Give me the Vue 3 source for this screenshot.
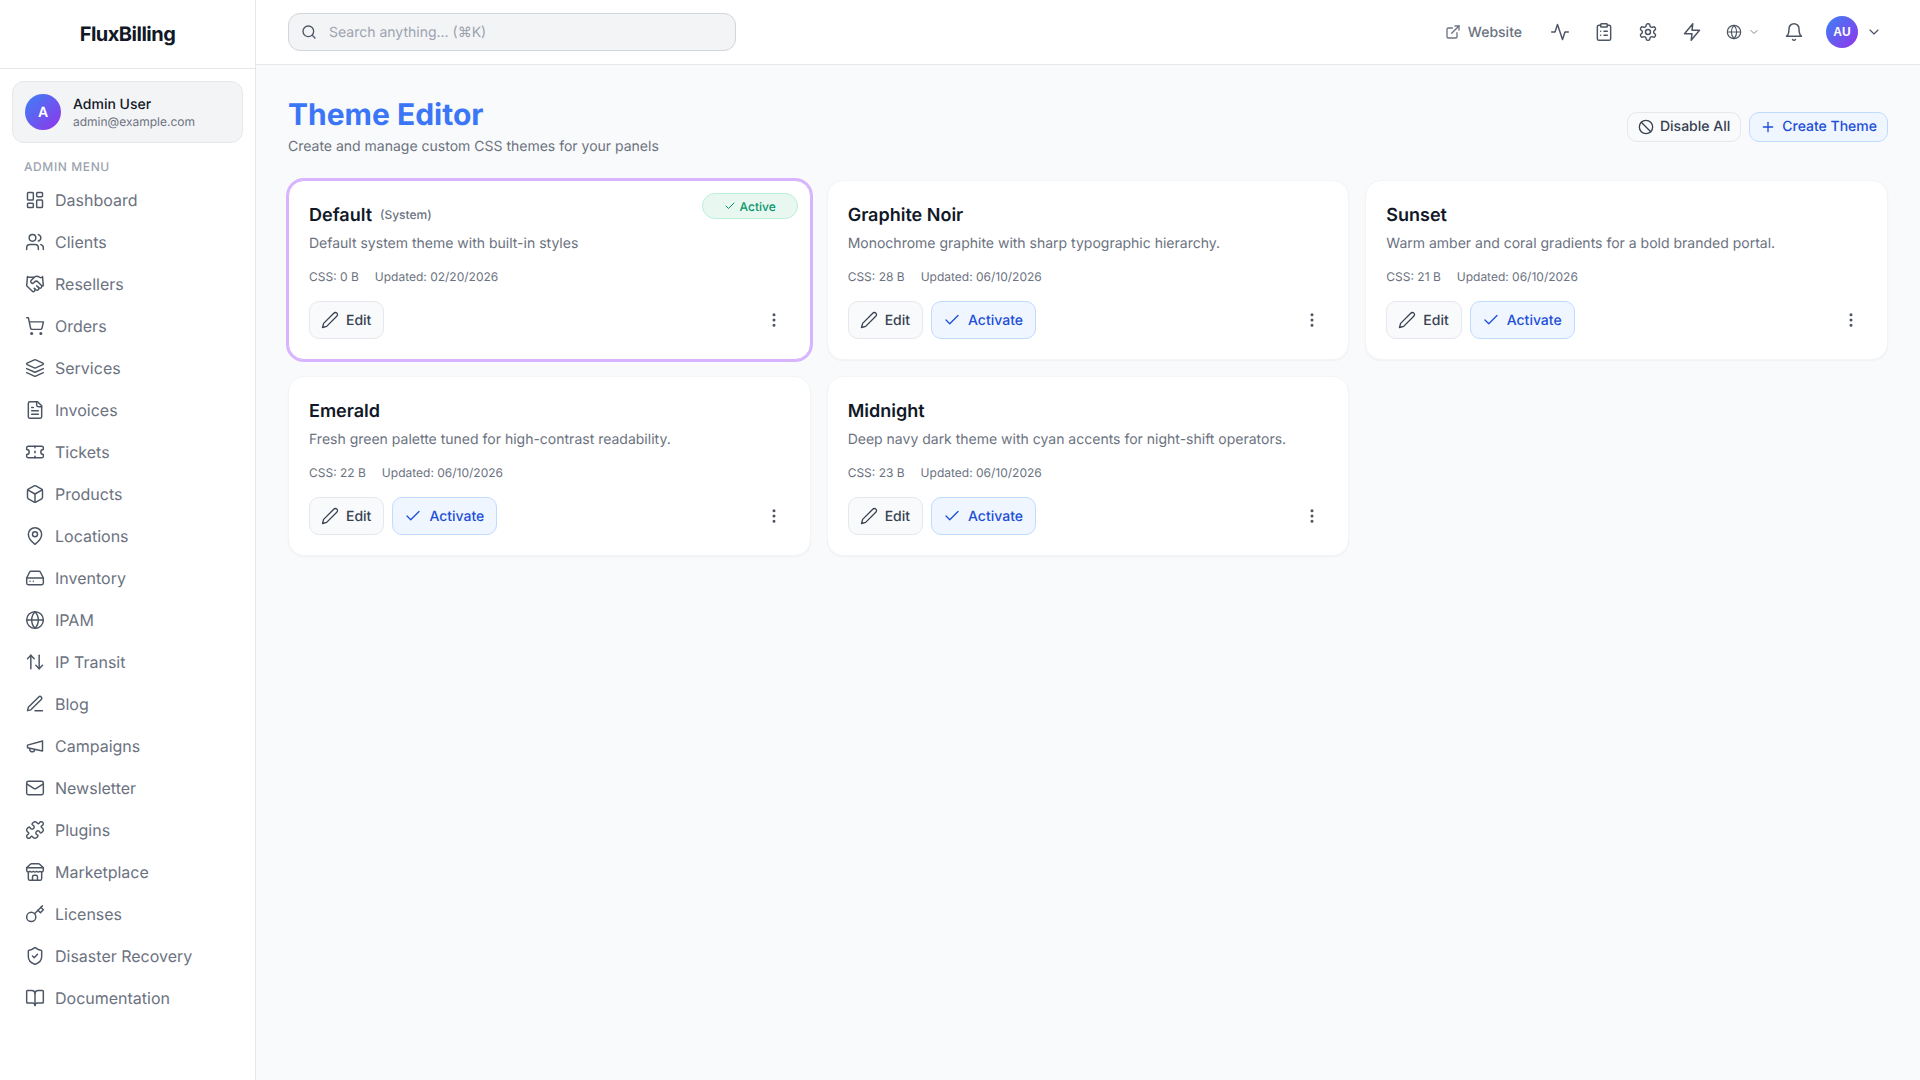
<script setup>
import { h } from 'vue';

const icons = {
    dashboard: '<rect x="3" y="3" width="7" height="9" rx="1"/><rect x="14" y="3" width="7" height="5" rx="1"/><rect x="14" y="12" width="7" height="9" rx="1"/><rect x="3" y="16" width="7" height="5" rx="1"/>',
    users: '<path d="M16 21v-2a4 4 0 0 0-4-4H6a4 4 0 0 0-4 4v2"/><circle cx="9" cy="7" r="4"/><path d="M22 21v-2a4 4 0 0 0-3-3.87"/><path d="M16 3.13a4 4 0 0 1 0 7.75"/>',
    handshake: '<path d="m11 17 2 2a1 1 0 1 0 3-3"/><path d="m14 14 2.5 2.5a1 1 0 1 0 3-3l-3.88-3.88a3 3 0 0 0-4.24 0l-.88.88a1 1 0 1 1-3-3l2.81-2.81a5.79 5.79 0 0 1 7.06-.87l.47.28a2 2 0 0 0 1.42.25L21 4"/><path d="m21 3 1 11h-2"/><path d="M3 3 2 14l6.5 6.5a1 1 0 1 0 3-3"/><path d="M3 4h8"/>',
    cart: '<circle cx="8" cy="21" r="1"/><circle cx="19" cy="21" r="1"/><path d="M2.05 2.05h2l2.66 12.42a2 2 0 0 0 2 1.58h9.78a2 2 0 0 0 1.95-1.57l1.65-7.43H5.12"/>',
    layers: '<path d="m12.83 2.18a2 2 0 0 0-1.66 0L2.6 6.08a1 1 0 0 0 0 1.83l8.58 3.91a2 2 0 0 0 1.66 0l8.58-3.9a1 1 0 0 0 0-1.83Z"/><path d="m22 17.65-9.17 4.16a2 2 0 0 1-1.66 0L2 17.65"/><path d="m22 12.65-9.17 4.16a2 2 0 0 1-1.66 0L2 12.65"/>',
    file: '<path d="M15 2H6a2 2 0 0 0-2 2v16a2 2 0 0 0 2 2h12a2 2 0 0 0 2-2V7Z"/><path d="M14 2v4a2 2 0 0 0 2 2h4"/><path d="M10 9H8"/><path d="M16 13H8"/><path d="M16 17H8"/>',
    ticket: '<path d="M2 9a3 3 0 0 1 0 6v2a2 2 0 0 0 2 2h16a2 2 0 0 0 2-2v-2a3 3 0 0 1 0-6V7a2 2 0 0 0-2-2H4a2 2 0 0 0-2 2Z"/><path d="M12 5v2"/><path d="M12 17v2"/><path d="M12 11v2"/>',
    box: '<path d="M21 8a2 2 0 0 0-1-1.73l-7-4a2 2 0 0 0-2 0l-7 4A2 2 0 0 0 3 8v8a2 2 0 0 0 1 1.73l7 4a2 2 0 0 0 2 0l7-4A2 2 0 0 0 21 16Z"/><path d="m3.3 7 8.7 5 8.7-5"/><path d="M12 22V12"/>',
    pin: '<path d="M20 10c0 6-8 12-8 12s-8-6-8-12a8 8 0 0 1 16 0Z"/><circle cx="12" cy="10" r="3"/>',
    drive: '<path d="M22 12H2"/><path d="M5.45 5.11 2 12v6a2 2 0 0 0 2 2h16a2 2 0 0 0 2-2v-6l-3.45-6.89A2 2 0 0 0 16.76 4H7.24a2 2 0 0 0-1.79 1.11z"/><path d="M6 16h.01"/><path d="M10 16h.01"/>',
    globe: '<circle cx="12" cy="12" r="10"/><path d="M12 2a14.5 14.5 0 0 0 0 20 14.5 14.5 0 0 0 0-20"/><path d="M2 12h20"/>',
    updown: '<path d="m21 16-4 4-4-4"/><path d="M17 20V4"/><path d="m3 8 4-4 4 4"/><path d="M7 4v16"/>',
    penline: '<path d="M12 20h9"/><path d="M16.5 3.5a2.12 2.12 0 0 1 3 3L7 19l-4 1 1-4Z"/>',
    megaphone: '<path d="m3 11 18-5v12L3 14v-3z"/><path d="M11.6 16.8a3 3 0 1 1-5.8-1.6"/>',
    mail: '<rect x="2" y="4" width="20" height="16" rx="2"/><path d="m22 7-8.97 5.7a1.94 1.94 0 0 1-2.06 0L2 7"/>',
    puzzle: '<path d="M19.439 7.85c-.049.322.059.648.289.878l1.568 1.568c.47.47.706 1.087.706 1.704s-.235 1.233-.706 1.704l-1.611 1.611a.98.98 0 0 1-.837.276c-.47-.07-.802-.48-.968-.925a2.501 2.501 0 1 0-3.214 3.214c.446.166.855.497.925.968a.979.979 0 0 1-.276.837l-1.61 1.61a2.404 2.404 0 0 1-1.705.707 2.402 2.402 0 0 1-1.704-.706l-1.568-1.568a1.026 1.026 0 0 0-.877-.29c-.493.074-.84.504-1.02.968a2.5 2.5 0 1 1-3.237-3.237c.464-.18.894-.527.967-1.02a1.026 1.026 0 0 0-.289-.877l-1.568-1.568A2.402 2.402 0 0 1 1.998 12c0-.617.236-1.234.706-1.704L4.23 8.77c.24-.24.581-.353.917-.303.515.077.877.528 1.073 1.01a2.5 2.5 0 1 0 3.259-3.259c-.482-.196-.933-.558-1.01-1.073-.05-.336.062-.676.303-.917l1.525-1.525A2.402 2.402 0 0 1 12 1.998c.617 0 1.234.236 1.704.706l1.568 1.568c.23.23.556.338.877.29.493-.074.84-.504 1.02-.968a2.5 2.5 0 1 1 3.237 3.237c-.464.18-.894.527-.967 1.02Z"/>',
    store: '<path d="m2 7 4.41-4.41A2 2 0 0 1 7.83 2h8.34a2 2 0 0 1 1.42.59L22 7"/><path d="M4 12v8a2 2 0 0 0 2 2h12a2 2 0 0 0 2-2v-8"/><path d="M15 22v-4a2 2 0 0 0-2-2h-2a2 2 0 0 0-2 2v4"/><path d="M2 7h20"/><path d="M22 7v3a2 2 0 0 1-2 2a2.7 2.7 0 0 1-1.59-.63.7.7 0 0 0-.82 0A2.7 2.7 0 0 1 16 12a2.7 2.7 0 0 1-1.59-.63.7.7 0 0 0-.82 0A2.7 2.7 0 0 1 12 12a2.7 2.7 0 0 1-1.59-.63.7.7 0 0 0-.82 0A2.7 2.7 0 0 1 8 12a2.7 2.7 0 0 1-1.59-.63.7.7 0 0 0-.82 0A2.7 2.7 0 0 1 4 12a2 2 0 0 1-2-2V7"/>',
    key: '<path d="m21 2-9.6 9.6"/><circle cx="7.5" cy="15.5" r="5.5"/><path d="m15.5 7.5 3 3L22 7l-3-3"/>',
    shield: '<path d="M20 13c0 5-3.5 7.5-7.66 8.95a1 1 0 0 1-.67-.01C7.5 20.5 4 18 4 13V6a1 1 0 0 1 1-1c2 0 4.5-1.2 6.24-2.72a1.17 1.17 0 0 1 1.52 0C14.51 3.81 17 5 19 5a1 1 0 0 1 1 1z"/><path d="m9 12 2 2 4-4"/>',
    book: '<path d="M12 7v14"/><path d="M3 18a1 1 0 0 1-1-1V4a1 1 0 0 1 1-1h5a4 4 0 0 1 4 4 4 4 0 0 1 4-4h5a1 1 0 0 1 1 1v13a1 1 0 0 1-1 1h-6a3 3 0 0 0-3 3 3 3 0 0 0-3-3z"/>',
    external: '<path d="M15 3h6v6"/><path d="M10 14 21 3"/><path d="M18 13v6a2 2 0 0 1-2 2H5a2 2 0 0 1-2-2V8a2 2 0 0 1 2-2h6"/>',
    activity: '<path d="M22 12h-4l-3 9L9 3l-3 9H2"/>',
    clipboard: '<rect x="8" y="2" width="8" height="4" rx="1"/><path d="M16 4h2a2 2 0 0 1 2 2v14a2 2 0 0 1-2 2H6a2 2 0 0 1-2-2V6a2 2 0 0 1 2-2h2"/><path d="M12 11h4"/><path d="M12 16h4"/><path d="M8 11h.01"/><path d="M8 16h.01"/>',
    settings: '<path d="M12.22 2h-.44a2 2 0 0 0-2 2v.18a2 2 0 0 1-1 1.73l-.43.25a2 2 0 0 1-2 0l-.15-.08a2 2 0 0 0-2.73.73l-.22.38a2 2 0 0 0 .73 2.73l.15.1a2 2 0 0 1 1 1.72v.51a2 2 0 0 1-1 1.74l-.15.09a2 2 0 0 0-.73 2.73l.22.38a2 2 0 0 0 2.73.73l.15-.08a2 2 0 0 1 2 0l.43.25a2 2 0 0 1 1 1.73V20a2 2 0 0 0 2 2h.44a2 2 0 0 0 2-2v-.18a2 2 0 0 1 1-1.73l.43-.25a2 2 0 0 1 2 0l.15.08a2 2 0 0 0 2.73-.73l.22-.39a2 2 0 0 0-.73-2.73l-.15-.08a2 2 0 0 1-1-1.74v-.5a2 2 0 0 1 1-1.74l.15-.09a2 2 0 0 0 .73-2.73l-.22-.38a2 2 0 0 0-2.73-.73l-.15.08a2 2 0 0 1-2 0l-.43-.25a2 2 0 0 1-1-1.73V4a2 2 0 0 0-2-2z"/><circle cx="12" cy="12" r="3"/>',
    zap: '<path d="M13 2 3 14h9l-1 8 10-12h-9l1-8z"/>',
    bell: '<path d="M6 8a6 6 0 0 1 12 0c0 7 3 9 3 9H3s3-2 3-9"/><path d="M10.3 21a1.94 1.94 0 0 0 3.4 0"/>',
    chevron: '<path d="m6 9 6 6 6-6"/>',
    search: '<circle cx="11" cy="11" r="8"/><path d="m21 21-4.3-4.3"/>',
    ban: '<circle cx="12" cy="12" r="10"/><path d="m4.9 4.9 14.2 14.2"/>',
    plus: '<path d="M5 12h14"/><path d="M12 5v14"/>',
    pencil: '<path d="M17 3a2.85 2.83 0 1 1 4 4L7.5 20.5 2 22l1.5-5.5Z"/>',
    check: '<path d="M20 6 9 17l-5-5"/>',
    more: '<circle cx="12" cy="5" r="1"/><circle cx="12" cy="12" r="1"/><circle cx="12" cy="19" r="1"/>',
};

const Icon = (props) =>
    h('svg', {
        viewBox: '0 0 24 24',
        fill: 'none',
        stroke: 'currentColor',
        'stroke-width': props.sw || 1.75,
        'stroke-linecap': 'round',
        'stroke-linejoin': 'round',
        width: props.size || 20,
        height: props.size || 20,
        innerHTML: icons[props.name],
    });
Icon.props = ['name', 'size', 'sw'];

const menu = [
    ['Dashboard', 'dashboard'],
    ['Clients', 'users'],
    ['Resellers', 'handshake'],
    ['Orders', 'cart'],
    ['Services', 'layers'],
    ['Invoices', 'file'],
    ['Tickets', 'ticket'],
    ['Products', 'box'],
    ['Locations', 'pin'],
    ['Inventory', 'drive'],
    ['IPAM', 'globe'],
    ['IP Transit', 'updown'],
    ['Blog', 'penline'],
    ['Campaigns', 'megaphone'],
    ['Newsletter', 'mail'],
    ['Plugins', 'puzzle'],
    ['Marketplace', 'store'],
    ['Licenses', 'key'],
    ['Disaster Recovery', 'shield'],
    ['Documentation', 'book'],
];

const themes = [
    { name: 'Default', system: true, active: true, desc: 'Default system theme with built-in styles', css: '0 B', updated: '02/20/2026' },
    { name: 'Graphite Noir', desc: 'Monochrome graphite with sharp typographic hierarchy.', css: '28 B', updated: '06/10/2026' },
    { name: 'Sunset', desc: 'Warm amber and coral gradients for a bold branded portal.', css: '21 B', updated: '06/10/2026' },
    { name: 'Emerald', desc: 'Fresh green palette tuned for high-contrast readability.', css: '22 B', updated: '06/10/2026' },
    { name: 'Midnight', desc: 'Deep navy dark theme with cyan accents for night-shift operators.', css: '23 B', updated: '06/10/2026' },
];
</script>

<template>
    <div class="layout">
        <aside class="sidebar">
            <div class="brand">FluxBilling</div>
            <div class="user-card">
                <div class="avatar big">A</div>
                <div class="user-info">
                    <div class="user-name">Admin User</div>
                    <div class="user-mail">admin@example.com</div>
                </div>
            </div>
            <div class="menu-title">ADMIN MENU</div>
            <nav class="menu">
                <a v-for="item in menu" :key="item[0]" class="menu-item">
                    <Icon :name="item[1]" :size="20" />
                    <span>{{ item[0] }}</span>
                </a>
            </nav>
        </aside>

        <div class="content">
            <header class="topbar">
                <div class="search">
                    <Icon name="search" :size="16" :sw="2" />
                    <span>Search anything... (⌘K)</span>
                </div>
                <div class="tools">
                    <a class="website">
                        <Icon name="external" :size="16" :sw="2" />
                        <span>Website</span>
                    </a>
                    <button class="tool"><Icon name="activity" /></button>
                    <button class="tool"><Icon name="clipboard" /></button>
                    <button class="tool"><Icon name="settings" /></button>
                    <button class="tool"><Icon name="zap" /></button>
                    <button class="lang">
                        <Icon name="globe" :size="16" />
                        <Icon name="chevron" :size="12" />
                    </button>
                    <button class="tool"><Icon name="bell" /></button>
                    <button class="profile">
                        <div class="avatar small">AU</div>
                        <Icon name="chevron" :size="16" />
                    </button>
                </div>
            </header>

            <main class="main">
                <div class="page-head">
                    <div>
                        <h1>Theme Editor</h1>
                        <p>Create and manage custom CSS themes for your panels</p>
                    </div>
                    <div class="head-actions">
                        <button class="btn plain"><Icon name="ban" :size="16" :sw="2" />Disable All</button>
                        <button class="btn blue"><Icon name="plus" :size="16" :sw="2" />Create Theme</button>
                    </div>
                </div>

                <div class="grid">
                    <div v-for="theme in themes" :key="theme.name" class="card" :class="{ active: theme.active }">
                        <span v-if="theme.active" class="badge"><Icon name="check" :size="12" :sw="2" />Active</span>
                        <div class="card-title">
                            <h3>{{ theme.name }}</h3>
                            <small v-if="theme.system">(System)</small>
                        </div>
                        <p class="desc">{{ theme.desc }}</p>
                        <div class="meta">
                            <span>CSS: {{ theme.css }}</span>
                            <span>Updated: {{ theme.updated }}</span>
                        </div>
                        <div class="actions">
                            <button class="btn plain tall"><Icon name="pencil" :size="18" />Edit</button>
                            <button v-if="!theme.active" class="btn blue tall"><Icon name="check" :size="18" />Activate</button>
                            <button class="more"><Icon name="more" :size="18" :sw="2" /></button>
                        </div>
                    </div>
                </div>
            </main>
        </div>
    </div>
</template>

<style>
html,
body {
    margin: 0;
    background: #f9fafb;
}
</style>

<style scoped>
.layout {
    display: flex;
    min-height: 100vh;
    font-family: Inter, 'Liberation Sans', sans-serif;
    color: #111827;
    text-rendering: geometricPrecision;
}

.sidebar {
    width: 256px;
    flex-shrink: 0;
    box-sizing: border-box;
    background: #fff;
    border-right: 1px solid #e5e7eb;
}
.brand {
    height: 69px;
    box-sizing: border-box;
    border-bottom: 1px solid #e5e7eb;
    display: flex;
    align-items: center;
    justify-content: center;
    font-size: 20px;
    font-weight: 700;
    letter-spacing: -0.5px;
}
.user-card {
    margin: 12px 12px 0;
    height: 62px;
    box-sizing: border-box;
    padding: 0 12px;
    display: flex;
    align-items: center;
    gap: 12px;
    background: #f3f4f6;
    border: 1px solid #e5e7eb;
    border-radius: 12px;
}
.avatar {
    display: flex;
    align-items: center;
    justify-content: center;
    border-radius: 50%;
    flex-shrink: 0;
    color: #fff;
    font-weight: 600;
    background: linear-gradient(135deg, #3b82f6, #9333ea);
}
.avatar.big {
    width: 36px;
    height: 36px;
    font-size: 14px;
}
.avatar.small {
    width: 32px;
    height: 32px;
    font-size: 12px;
}
.user-name {
    font-size: 14px;
    font-weight: 500;
    line-height: 20px;
    padding-top: 1px;
    margin-bottom: -1px;
}
.user-mail {
    font-size: 12px;
    line-height: 16px;
    color: #6b7280;
}
.menu-title {
    margin: 16px 24px 0;
    font-size: 12px;
    line-height: 16px;
    font-weight: 500;
    letter-spacing: 0.6px;
    color: #9ca3af;
}
.menu {
    margin-top: 4px;
}
.menu-item {
    height: 42px;
    display: flex;
    align-items: center;
    gap: 10px;
    padding-left: 25px;
    font-size: 16px;
    color: #6b7280;
}
.menu-item svg {
    color: #4b5563;
}

.content {
    flex: 1;
    min-width: 0;
}
.topbar {
    height: 65px;
    box-sizing: border-box;
    background: #fff;
    border-bottom: 1px solid #e5e7eb;
    display: flex;
    align-items: center;
    justify-content: space-between;
    padding: 0 32px;
}
.search {
    width: 448px;
    height: 38px;
    box-sizing: border-box;
    padding: 0 12px;
    display: flex;
    align-items: center;
    gap: 12px;
    background: #f3f4f6;
    border: 1px solid #d1d5db;
    border-radius: 12px;
    font-size: 14px;
    color: #9ca3af;
}
.search svg {
    color: #4b5563;
}
.tools {
    display: flex;
    align-items: center;
}
.tools button {
    border: 0;
    background: none;
    padding: 0;
    display: flex;
    align-items: center;
    color: #4b5563;
}
.website {
    display: flex;
    align-items: center;
    gap: 7px;
    font-size: 14px;
    font-weight: 500;
    color: #6b7280;
    margin-right: 16px;
}
.tool {
    width: 44px;
    height: 36px;
    justify-content: center;
}
.lang {
    width: 58px;
    justify-content: center;
    gap: 6px;
}
.tools .lang svg:last-child {
    color: #6b7280;
}
.profile {
    gap: 8px;
    margin-left: 10px;
    margin-right: 6px;
}

.main {
    padding: 31px 32px 32px;
}
.page-head {
    display: flex;
    align-items: center;
    justify-content: space-between;
    margin-bottom: 23px;
}
h1 {
    margin: 1px 0 0;
    font-size: 30px;
    line-height: 36px;
    font-weight: 700;
    color: #3b76f6;
}
.page-head p {
    margin: 4px 0 0;
    font-size: 14px;
    line-height: 20px;
    color: #6b7280;
}
.head-actions {
    display: flex;
    gap: 8px;
}
.btn {
    display: inline-flex;
    align-items: center;
    gap: 6px;
    height: 30px;
    padding: 0 10px;
    box-sizing: border-box;
    font-family: inherit;
    font-size: 14px;
    font-weight: 500;
    border-radius: 10px;
    border: 1px solid;
    text-rendering: geometricPrecision;
}
.btn.tall {
    height: 38px;
    padding: 0 12px 0 11px;
    gap: 7px;
}
.plain {
    background: #f9fafb;
    border-color: #e5e7eb;
    color: #374151;
}
.blue {
    background: #eff6ff;
    border-color: #bfdbfe;
    color: #1d4ed8;
}

.grid {
    display: grid;
    grid-template-columns: repeat(3, 1fr);
    gap: 16px;
}
.card {
    position: relative;
    padding: 20px;
    background: #fff;
    border: 1px solid #f3f4f6;
    border-radius: 16px;
    box-shadow: 0 1px 2px rgba(0, 0, 0, 0.04);
}
.card.active {
    border-color: #d8b4fe;
    box-shadow: 0 0 0 2px #d8b4fe;
}
.badge {
    position: absolute;
    top: 12px;
    right: 12px;
    height: 26px;
    width: 96px;
    box-sizing: border-box;
    display: inline-flex;
    align-items: center;
    justify-content: center;
    gap: 4px;
    font-size: 12px;
    font-weight: 500;
    color: #059669;
    background: #e8f8f1;
    border: 1px solid #bbefd9;
    border-radius: 999px;
}
.card-title {
    display: flex;
    align-items: center;
    gap: 8px;
    margin-top: 1px;
}
h3 {
    margin: 0;
    font-size: 18px;
    line-height: 28px;
    font-weight: 600;
}
small {
    font-size: 12px;
    font-weight: 500;
    color: #6b7280;
    margin-bottom: 4px;
}
.desc {
    margin: 4px 0 0;
    font-size: 14px;
    line-height: 20px;
    color: #6b7280;
}
.meta {
    margin-top: 15px;
    display: flex;
    gap: 16px;
    font-size: 12px;
    line-height: 16px;
    color: #6b7280;
}
.actions {
    margin-top: 16px;
    display: flex;
    align-items: center;
    gap: 8px;
}
.more {
    margin-left: auto;
    width: 32px;
    height: 32px;
    padding: 0;
    border: 0;
    background: none;
    display: flex;
    align-items: center;
    justify-content: center;
    color: #4b5563;
}
</style>
